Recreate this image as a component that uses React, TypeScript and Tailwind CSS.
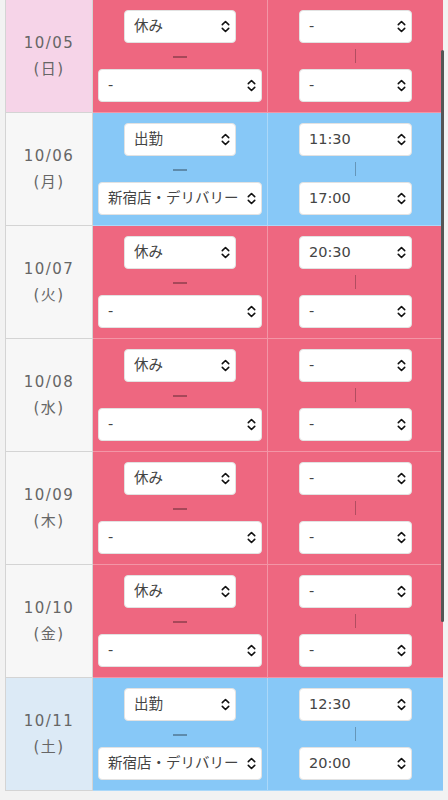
import React from "react";

type Row = {
  date: string;
  dow: string;
  dateBg: string;
  kind: "off" | "on";
  status: string;
  place: string;
  start: string;
  end: string;
};

const rows: Row[] = [
  { date: "10/05", dow: "日", dateBg: "bg-[#f6d4e8]", kind: "off", status: "休み", place: "-", start: "-", end: "-" },
  { date: "10/06", dow: "月", dateBg: "bg-[#f7f7f7]", kind: "on", status: "出勤", place: "新宿店・デリバリー", start: "11:30", end: "17:00" },
  { date: "10/07", dow: "火", dateBg: "bg-[#f7f7f7]", kind: "off", status: "休み", place: "-", start: "20:30", end: "-" },
  { date: "10/08", dow: "水", dateBg: "bg-[#f7f7f7]", kind: "off", status: "休み", place: "-", start: "-", end: "-" },
  { date: "10/09", dow: "木", dateBg: "bg-[#f7f7f7]", kind: "off", status: "休み", place: "-", start: "-", end: "-" },
  { date: "10/10", dow: "金", dateBg: "bg-[#f7f7f7]", kind: "off", status: "休み", place: "-", start: "-", end: "-" },
  { date: "10/11", dow: "土", dateBg: "bg-[#dceaf6]", kind: "on", status: "出勤", place: "新宿店・デリバリー", start: "12:30", end: "20:00" },
];

const font = { fontFamily: '"DejaVu Sans", "Noto Sans CJK JP", sans-serif' };

function Chevrons() {
  return (
    <svg width="9" height="13" viewBox="0 0 9 13" fill="none" className="shrink-0">
      <path d="M1.3 4.6 L4.5 1.5 L7.7 4.6" stroke="#111" strokeWidth="1.6" strokeLinecap="round" strokeLinejoin="round" />
      <path d="M1.3 8.4 L4.5 11.5 L7.7 8.4" stroke="#111" strokeWidth="1.6" strokeLinecap="round" strokeLinejoin="round" />
    </svg>
  );
}

function Select({ value, width }: { value: string; width: string }) {
  return (
    <div
      className={`${width} h-[33px] bg-white rounded-[4px] border border-[#e2e2e2] flex items-center justify-between pl-[9px] pr-[5px] text-[14.5px] text-[#444] whitespace-nowrap`}
    >
      <span className="leading-none">{value}</span>
      <Chevrons />
    </div>
  );
}

export default function App() {
  return (
    <div className="relative w-[448px] h-[800px] bg-[#f2f2f2] overflow-hidden" style={font}>
      <div className="ml-[5px] w-[438px] flex flex-col">
        {rows.map((r) => {
          const colBg = r.kind === "off" ? "bg-[#ee6780]" : "bg-[#87c8f7]";
          return (
            <div key={r.date} className="flex h-[113px]">
              <div
                className={`w-[88px] ${r.dateBg} border-l border-r border-b border-[#d4d4d4] flex flex-col items-center justify-center text-[#666] text-[15px] tracking-[0.1em]`}
              >
                <div className="h-[26px] flex items-center">{r.date}</div>
                <div className="h-[26px] flex items-center">({r.dow})</div>
              </div>
              <div className={`w-[175px] ${colBg} border-r border-b border-white/30 flex flex-col items-center pt-[10px]`}>
                <Select value={r.status} width="w-[112px]" />
                <div className="h-[26px] flex items-center justify-center pt-[2px]">
                  <div className="w-[14px] h-[2px] bg-black/30" />
                </div>
                <Select value={r.place} width="w-[164px]" />
              </div>
              <div className={`w-[175px] ${colBg} border-b border-white/30 flex flex-col items-center pt-[10px]`}>
                <Select value={r.start} width="w-[113px]" />
                <div className="h-[26px] flex items-center justify-center">
                  <div className="w-[1px] h-[14px] bg-black/25" />
                </div>
                <Select value={r.end} width="w-[113px]" />
              </div>
            </div>
          );
        })}
      </div>
      <div className="absolute left-[441px] top-[50px] w-[3px] h-[572px] rounded-full bg-[#555]" />
    </div>
  );
}
